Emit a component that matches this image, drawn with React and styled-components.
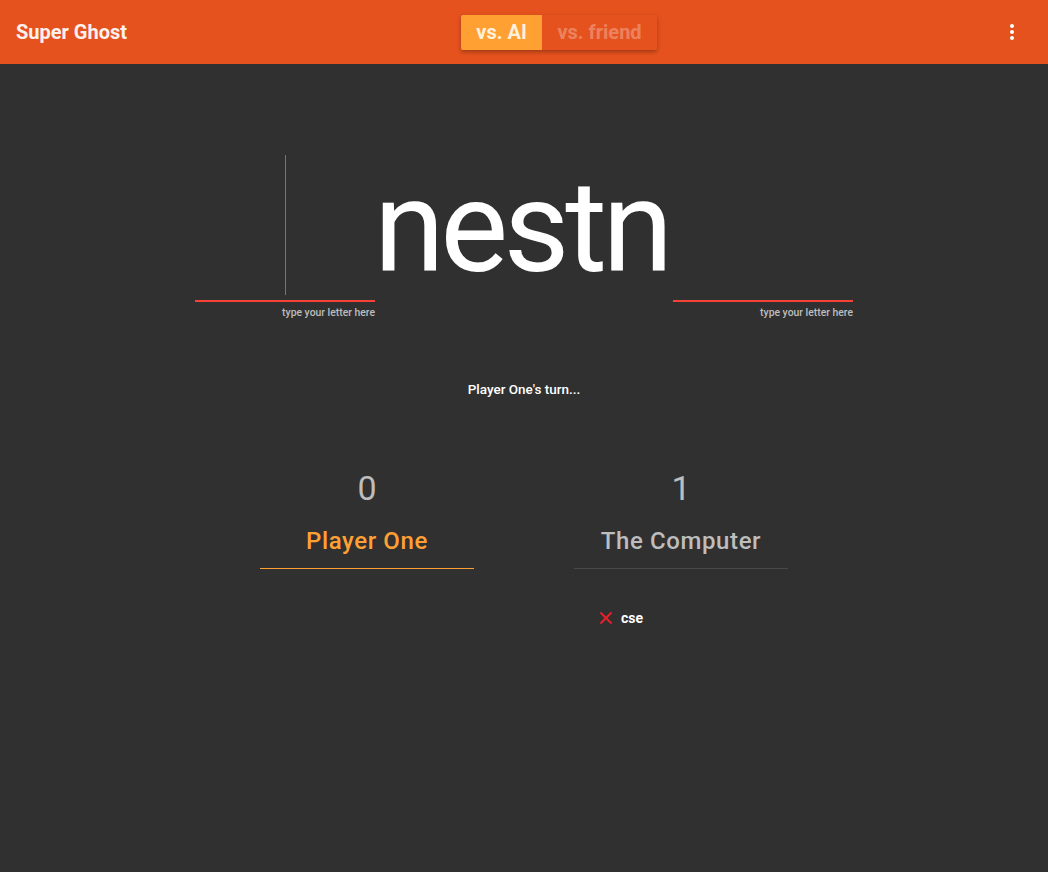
import React from 'react';
import styled, { createGlobalStyle } from 'styled-components';

const GlobalStyle = createGlobalStyle`
  html, body {
    margin: 0;
    padding: 0;
    background: #303030;
    font-family: Roboto, "Liberation Sans", sans-serif;
  }
`;

const App = () => {
  return (
    <>
      <GlobalStyle />
      <Page>
        <Header>
          <Title>Super Ghost</Title>
          <ModeToggle>
            <ModeButton $active>vs. AI</ModeButton>
            <ModeButton>vs. friend</ModeButton>
          </ModeToggle>
          <MenuButton aria-label="menu">
            <Dot />
            <Dot />
            <Dot />
          </MenuButton>
        </Header>

        <Main>
          <WordRow>
            <LetterField>
              <FieldBox>
                <Caret />
              </FieldBox>
              <Helper>type your letter here</Helper>
            </LetterField>
            <Word>nestn</Word>
            <LetterField>
              <FieldBox />
              <Helper>type your letter here</Helper>
            </LetterField>
          </WordRow>

          <Turn>Player One's turn...</Turn>

          <Players>
            <PlayerColumn>
              <Score>0</Score>
              <PlayerTab $active>Player One</PlayerTab>
            </PlayerColumn>
            <PlayerColumn>
              <Score>1</Score>
              <PlayerTab>The Computer</PlayerTab>
              <LostWords>
                <LostWord>
                  <svg width="14" height="14" viewBox="0 0 14 14">
                    <path d="M1.5 1.5 L12.5 12.5 M12.5 1.5 L1.5 12.5" stroke="#e8202a" strokeWidth="2" />
                  </svg>
                  cse
                </LostWord>
              </LostWords>
            </PlayerColumn>
          </Players>
        </Main>
      </Page>
    </>
  );
};

export default App;

const Page = styled.div`
  min-height: 872px;
  background: #303030;
`;

const Header = styled.header`
  height: 64px;
  background: #e5521e;
  display: grid;
  grid-template-columns: 1fr auto 1fr;
  align-items: center;
  padding: 0 16px;
  box-sizing: border-box;
`;

const Title = styled.h1`
  margin: 0;
  font-size: 20px;
  font-weight: 700;
  color: #fdf1ee;
`;

const ModeToggle = styled.div`
  display: flex;
  height: 35px;
  margin-left: 70px;
  box-shadow: 0 2px 4px rgba(0, 0, 0, 0.3);
  border-radius: 2px;
  overflow: hidden;
`;

const ModeButton = styled.button`
  border: none;
  margin: 0;
  padding: 0;
  font-family: Roboto, "Liberation Sans", sans-serif;
  font-size: 20px;
  font-weight: 700;
  background: ${(p) => (p.$active ? '#ffa033' : '#e5521e')};
  color: ${(p) => (p.$active ? '#fff1dc' : 'rgba(255, 255, 255, 0.3)')};
  width: ${(p) => (p.$active ? '81px' : '115px')};
  cursor: pointer;
`;

const MenuButton = styled.div`
  display: flex;
  flex-direction: column;
  align-items: flex-end;
  gap: 2px;
  padding-right: 18px;
`;

const Dot = styled.span`
  width: 4px;
  height: 4px;
  border-radius: 50%;
  background: #fff;
`;

const Main = styled.main`
  display: flex;
  flex-direction: column;
  align-items: center;
`;

const WordRow = styled.div`
  display: flex;
  align-items: flex-start;
  gap: 3px;
  margin-top: 94px;
`;

const LetterField = styled.div`
  width: 180px;
  display: flex;
  flex-direction: column;
  align-items: flex-end;
`;

const FieldBox = styled.div`
  width: 100%;
  height: 144px;
  border-bottom: 2px solid #f44336;
  display: flex;
  justify-content: center;
  align-items: flex-end;
  box-sizing: border-box;
  padding-bottom: 5px;
`;

const Caret = styled.div`
  width: 1px;
  height: 140px;
  background: #e8453c;
`;

const Helper = styled.div`
  font-size: 10.4px;
  font-weight: 500;
  color: #bdbdbd;
  margin-top: 5px;
  line-height: 12px;
`;

const Word = styled.div`
  font-size: 128px;
  line-height: 144px;
  color: #fff;
  font-weight: 400;
  width: 292px;
  text-align: left;
  margin-top: -3px;
  letter-spacing: -4.5px;
  text-indent: -4px;
  white-space: nowrap;
`;

const Turn = styled.div`
  margin-top: 62px;
  font-size: 13.5px;
  font-weight: 500;
  color: #fff;
`;

const Players = styled.div`
  display: flex;
  gap: 100px;
  margin-top: 71px;
`;

const PlayerColumn = styled.div`
  width: 214px;
  display: flex;
  flex-direction: column;
  align-items: stretch;
`;

const Score = styled.div`
  font-size: 34px;
  color: #bdbdbd;
  text-align: center;
  line-height: 40px;
`;

const PlayerTab = styled.div`
  margin-top: 18px;
  font-size: 24px;
  font-weight: 500;
  letter-spacing: 0.6px;
  text-align: center;
  line-height: 30px;
  padding-bottom: 12px;
  color: ${(p) => (p.$active ? '#ffa033' : '#bdbdbd')};
  border-bottom: 1px solid ${(p) => (p.$active ? '#ffa033' : '#494949')};
`;

const LostWords = styled.div`
  padding: 41px 0 0 25px;
`;

const LostWord = styled.div`
  display: flex;
  align-items: center;
  gap: 8px;
  font-size: 14px;
  font-weight: 700;
  color: #fff;
`;
